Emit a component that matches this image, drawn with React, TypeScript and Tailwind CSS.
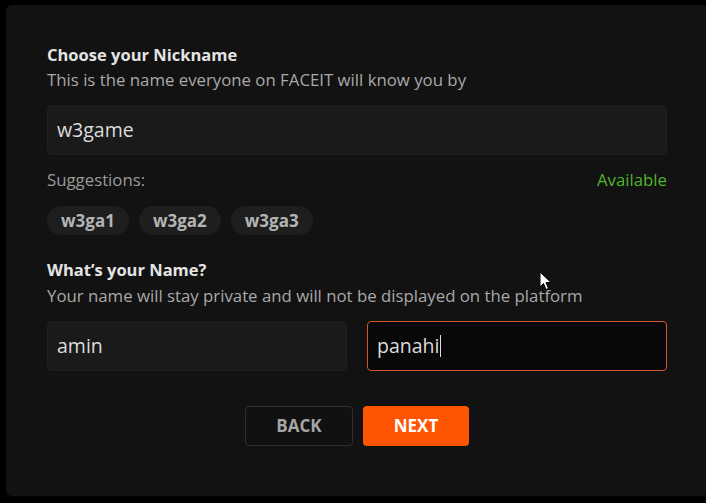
import React from "react";

const suggestions = ["w3ga1", "w3ga2", "w3ga3"];

function Cursor() {
  return (
    <svg
      className="absolute left-[539px] top-[271px]"
      width="13"
      height="20"
      viewBox="0 0 13 20"
    >
      <path
        d="M1 1 L1 16 L4.5 12.5 L7 18.5 L9.5 17.5 L7 11.5 L12 11.5 Z"
        fill="#ffffff"
        stroke="#000000"
        strokeWidth="1"
        strokeLinejoin="round"
      />
    </svg>
  );
}

export default function App() {
  const [nickname, setNickname] = React.useState("w3game");
  const [first, setFirst] = React.useState("amin");
  const [last] = React.useState("panahi");

  return (
    <div
      className="relative w-[706px] h-[503px] overflow-hidden bg-black pl-[6px] pt-[5px]"
      style={{ fontFamily: '"Open Sans", "Noto Sans", sans-serif' }}
    >
      <div className="w-[702px] h-[491px] rounded-[6px] bg-[#121212] px-[41px] pt-[40px]">
        {/* nickname */}
        <h3 className="text-[16.5px] leading-5 font-bold text-[#e4e4e4]">
          Choose your Nickname
        </h3>
        <p className="mt-[3px] text-[16.8px] leading-6 text-[#a9a9a9]">
          This is the name everyone on FACEIT will know you by
        </p>

        <div className="mt-[13px] h-[50px] rounded-[4px] bg-[#1a1a1a] border border-[#1e1e1e] flex items-center px-[9px]">
          <input
            className="w-full bg-transparent outline-none text-[19.5px] text-[#dcdcdc]"
            value={nickname}
            onChange={(e) => setNickname(e.target.value)}
          />
        </div>

        <div className="mt-[13px] flex justify-between text-[16.8px] leading-6">
          <span className="text-[#9a9a9a]">Suggestions:</span>
          <span className="text-[#4fb52c]">Available</span>
        </div>

        <div className="mt-[14px] flex gap-[10px]">
          {suggestions.map((s) => (
            <button
              key={s}
              className="h-[29px] px-[14px] rounded-full bg-[#1e1e1e] text-[17px] font-bold text-[#b4b4b4]"
              onClick={() => setNickname(s)}
            >
              {s}
            </button>
          ))}
        </div>

        {/* name */}
        <h3 className="mt-[25px] text-[16.5px] leading-5 font-bold text-[#e4e4e4]">
          What’s your Name?
        </h3>
        <p className="mt-[4px] text-[16.8px] leading-6 text-[#a9a9a9]">
          Your name will stay private and will not be displayed on the platform
        </p>

        <div className="mt-[13px] grid grid-cols-2 gap-[20px]">
          <div className="h-[50px] rounded-[4px] bg-[#1a1a1a] border border-[#1e1e1e] flex items-center px-[9px]">
            <input
              className="w-full bg-transparent outline-none text-[19.5px] text-[#dcdcdc]"
              value={first}
              onChange={(e) => setFirst(e.target.value)}
            />
          </div>
          <div className="h-[50px] rounded-[4px] bg-[#080808] border border-[#d4562c] flex items-center px-[9px]">
            <span className="text-[19.5px] text-[#dcdcdc]">{last}</span>
            <span className="ml-[1px] w-px h-[22px] bg-[#dcdcdc]" />
          </div>
        </div>

        <div className="mt-[35px] flex justify-center gap-[10px]">
          <button className="w-[108px] h-[40px] rounded-[4px] border border-[#2e2e2e] bg-[#111111] text-[17px] font-bold text-[#a5a5a5]">
            BACK
          </button>
          <button className="w-[106px] h-[40px] rounded-[4px] bg-[#ff5500] text-[17px] font-bold text-white">
            NEXT
          </button>
        </div>
      </div>
      <Cursor />
    </div>
  );
}
